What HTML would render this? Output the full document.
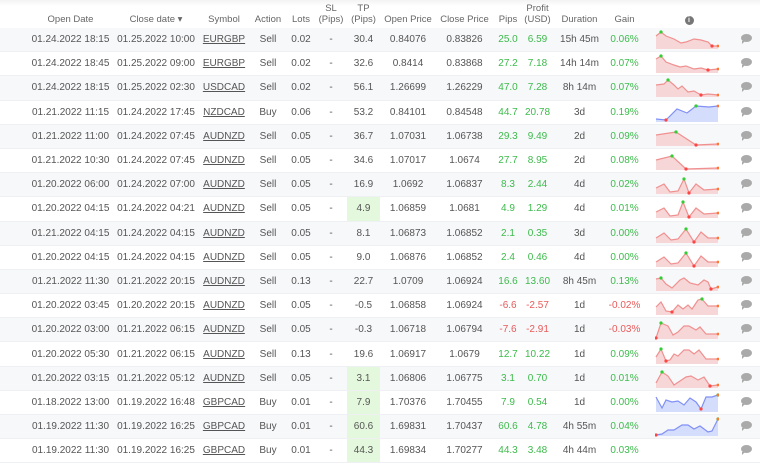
<!DOCTYPE html>
<html><head><meta charset="utf-8"><style>
html,body{margin:0;padding:0;background:#fff;width:760px;height:464px;overflow:hidden;font-family:"Liberation Sans",Arial,sans-serif;}
table{border-collapse:collapse;table-layout:fixed;width:760px;font-size:10px;color:#555;}
td,th{text-align:center;padding:0;white-space:nowrap;}
th{font-weight:normal;color:#666;height:24.5px;vertical-align:bottom;padding-bottom:3px;line-height:11px;font-size:9.5px}
thead tr{background:linear-gradient(#f3f3f3,#fff 6px)}
tbody tr{height:24.2px}
tbody tr:nth-child(odd){background:#f7f8fa}
tbody tr{border-bottom:1px solid #eef0f3}
.g{color:#3dbb4c}.r{color:#e85a5a}
.u{text-decoration:underline}
.hl{background:#e4f8dd}
.ic{display:inline-block;width:11px;height:8px;background:#aaa;border-radius:50%;position:relative}
.ic:after{content:"";position:absolute;left:1px;bottom:-2px;border-left:3px solid #aaa;border-bottom:3px solid transparent}
.info{display:inline-block;width:9px;height:9px;border-radius:50%;background:#777;color:#fff;font-size:7px;line-height:9px;font-weight:bold}
svg{display:block;margin-left:13px}
</style></head><body>
<table>
<colgroup><col style="width:28px"><col style="width:85px"><col style="width:86px"><col style="width:50px"><col style="width:38px"><col style="width:28px"><col style="width:32px"><col style="width:33px"><col style="width:56px"><col style="width:57px"><col style="width:30px"><col style="width:29px"><col style="width:55px"><col style="width:35px"><col style="width:78px"><col style="width:40px"></colgroup>
<thead><tr><th></th><th>Open Date</th><th>Close date ▾</th><th>Symbol</th><th>Action</th><th>Lots</th><th>SL<br>(Pips)</th><th>TP<br>(Pips)</th><th>Open Price</th><th>Close Price</th><th>Pips</th><th>Profit<br>(USD)</th><th>Duration</th><th>Gain</th><th style="padding-left:16px"><span class="info">i</span></th><th></th></tr></thead>
<tbody id="tb"></tbody></table>
<script>
var rows=[
["01.24.2022 18:15","01.25.2022 10:00","EURGBP","Sell","0.02","30.4","0.84076","0.83826","25.0","6.59","15h 45m","0.06%",0,"r",[[0,6],[5,2],[10,6],[18,9],[25,13],[30,12],[38,9],[45,10],[52,12],[56,16],[62,16]]],
["01.24.2022 18:45","01.25.2022 09:00","EURGBP","Sell","0.02","32.6","0.8414","0.83868","27.2","7.18","14h 14m","0.07%",0,"r",[[0,5],[5,2],[10,8],[18,11],[24,13],[30,12],[38,15],[45,14],[52,16],[62,15]]],
["01.24.2022 18:15","01.25.2022 02:30","USDCAD","Sell","0.02","56.1","1.26699","1.26229","47.0","7.28","8h 14m","0.07%",0,"r",[[0,7],[8,6],[12,2],[18,7],[22,11],[26,8],[32,14],[38,13],[45,17],[52,16],[62,17]]],
["01.21.2022 11:15","01.24.2022 17:45","NZDCAD","Buy","0.06","53.2","0.84101","0.84548","44.7","20.78","3d","0.19%",0,"b",[[0,16],[10,17],[21,6],[31,10],[40,3],[53,4],[62,3]]],
["01.21.2022 11:00","01.24.2022 07:45","AUDNZD","Sell","0.05","36.7","1.07031","1.06738","29.3","9.49","2d","0.09%",0,"r",[[0,8],[20,5],[40,18],[62,17]]],
["01.21.2022 10:30","01.24.2022 07:45","AUDNZD","Sell","0.05","34.6","1.07017","1.0674","27.7","8.95","2d","0.08%",0,"r",[[0,9],[16,5],[30,18],[62,17]]],
["01.20.2022 06:00","01.24.2022 07:00","AUDNZD","Sell","0.05","16.9","1.0692","1.06837","8.3","2.44","4d","0.02%",0,"r",[[0,13],[8,9],[14,17],[22,16],[28,4],[33,18],[40,9],[48,15],[62,14]]],
["01.20.2022 04:15","01.24.2022 04:21","AUDNZD","Sell","0.05","4.9","1.06859","1.0681","4.9","1.29","4d","0.01%",1,"r",[[0,13],[8,9],[14,17],[22,16],[27,3],[33,18],[40,9],[48,15],[62,14]]],
["01.21.2022 04:15","01.24.2022 04:15","AUDNZD","Sell","0.05","8.1","1.06873","1.06852","2.1","0.35","3d","0.00%",0,"r",[[0,14],[8,9],[15,16],[22,15],[30,5],[38,18],[45,8],[52,14],[62,14]]],
["01.20.2022 04:15","01.24.2022 04:15","AUDNZD","Sell","0.05","9.0","1.06876","1.06852","2.4","0.46","4d","0.00%",0,"r",[[0,14],[8,9],[15,16],[22,15],[30,5],[38,18],[45,8],[52,14],[62,14]]],
["01.21.2022 11:30","01.21.2022 20:15","AUDNZD","Sell","0.13","22.7","1.0709","1.06924","16.6","13.60","8h 45m","0.13%",0,"r",[[0,7],[5,6],[10,12],[16,16],[24,8],[28,6],[34,11],[42,13],[48,8],[52,10],[55,17],[62,15]]],
["01.20.2022 03:45","01.20.2022 20:15","AUDNZD","Sell","0.05","-0.5","1.06858","1.06924","-6.6","-2.57","1d","-0.02%",0,"r",[[0,11],[5,6],[10,15],[16,16],[22,9],[27,13],[32,9],[36,13],[42,4],[46,3],[52,10],[62,10]]],
["01.20.2022 03:00","01.21.2022 06:15","AUDNZD","Sell","0.05","-0.3","1.06718","1.06794","-7.6","-2.91","1d","-0.03%",0,"r",[[0,18],[5,3],[12,6],[17,15],[22,12],[28,6],[33,6],[40,10],[44,7],[50,14],[62,14]]],
["01.20.2022 05:30","01.21.2022 06:15","AUDNZD","Sell","0.13","19.6","1.06917","1.0679","12.7","10.22","1d","0.09%",0,"r",[[0,12],[5,4],[10,16],[14,15],[18,9],[22,11],[28,5],[33,5],[38,9],[43,5],[50,14],[62,14]]],
["01.20.2022 03:15","01.21.2022 05:12","AUDNZD","Sell","0.05","3.1","1.06806","1.06775","3.1","0.70","1d","0.01%",1,"r",[[0,14],[6,3],[12,7],[18,16],[24,12],[30,8],[35,7],[42,11],[48,8],[54,17],[62,16]]],
["01.18.2022 13:00","01.19.2022 16:48","GBPCAD","Buy","0.01","7.9","1.70376","1.70455","7.9","0.54","1d","0.00%",1,"b",[[0,4],[6,15],[10,7],[16,9],[22,8],[28,12],[34,5],[40,9],[45,16],[50,4],[56,4],[62,2]]],
["01.19.2022 11:30","01.19.2022 16:25","GBPCAD","Buy","0.01","60.6","1.69831","1.70437","60.6","4.78","4h 55m","0.04%",1,"b",[[0,18],[6,17],[12,13],[18,13],[26,8],[32,8],[38,12],[44,9],[52,15],[56,14],[62,2]]],
["01.19.2022 11:30","01.19.2022 16:25","GBPCAD","Buy","0.01","44.3","1.69834","1.70277","44.3","3.48","4h 44m","0.03%",1,"n",null]
];
var h="";
rows.forEach(function(r){
 var c=(r[8][0]=="-")?"r":"g";
 var sv="";
 if(r[14]){
  var p=r[14],pts=p.map(function(q){return q[0]+","+(q[1]+1)}).join(" ");
  var st=r[13]=="b"?"#8090f5":"#f09090",fl=r[13]=="b"?"#d5ddfc":"#f6d6d6";
  var mn=p[0],mx=p[0];p.forEach(function(q){if(q[1]<mn[1])mn=q;if(q[1]>mx[1])mx=q;});
  sv='<svg width="64" height="21" viewBox="-1 0 64 21"><polygon points="0,20 '+pts+' 62,20" fill="'+fl+'"/><polyline points="'+pts+'" fill="none" stroke="'+st+'" stroke-width="1.2"/><circle cx="'+mn[0]+'" cy="'+(mn[1]+1)+'" r="1.6" fill="#3c3"/><circle cx="'+mx[0]+'" cy="'+(mx[1]+1)+'" r="1.6" fill="#f44"/><circle cx="62" cy="'+(p[p.length-1][1]+1)+'" r="1.4" fill="#f73"/></svg>';
 }
 h+='<tr><td></td><td>'+r[0]+'</td><td>'+r[1]+'</td><td class="u">'+r[2]+'</td><td>'+r[3]+'</td><td>'+r[4]+'</td><td>-</td><td'+(r[12]?' class="hl"':'')+'>'+r[5]+'</td><td>'+r[6]+'</td><td>'+r[7]+'</td><td class="'+c+'">'+r[8]+'</td><td class="'+c+'">'+r[9]+'</td><td>'+r[10]+'</td><td class="'+c+'">'+r[11]+'</td><td>'+sv+'</td><td style="text-align:right;padding-right:8px"><span class="ic"></span></td></tr>';
});
document.getElementById("tb").innerHTML=h;
</script>
</body></html>
